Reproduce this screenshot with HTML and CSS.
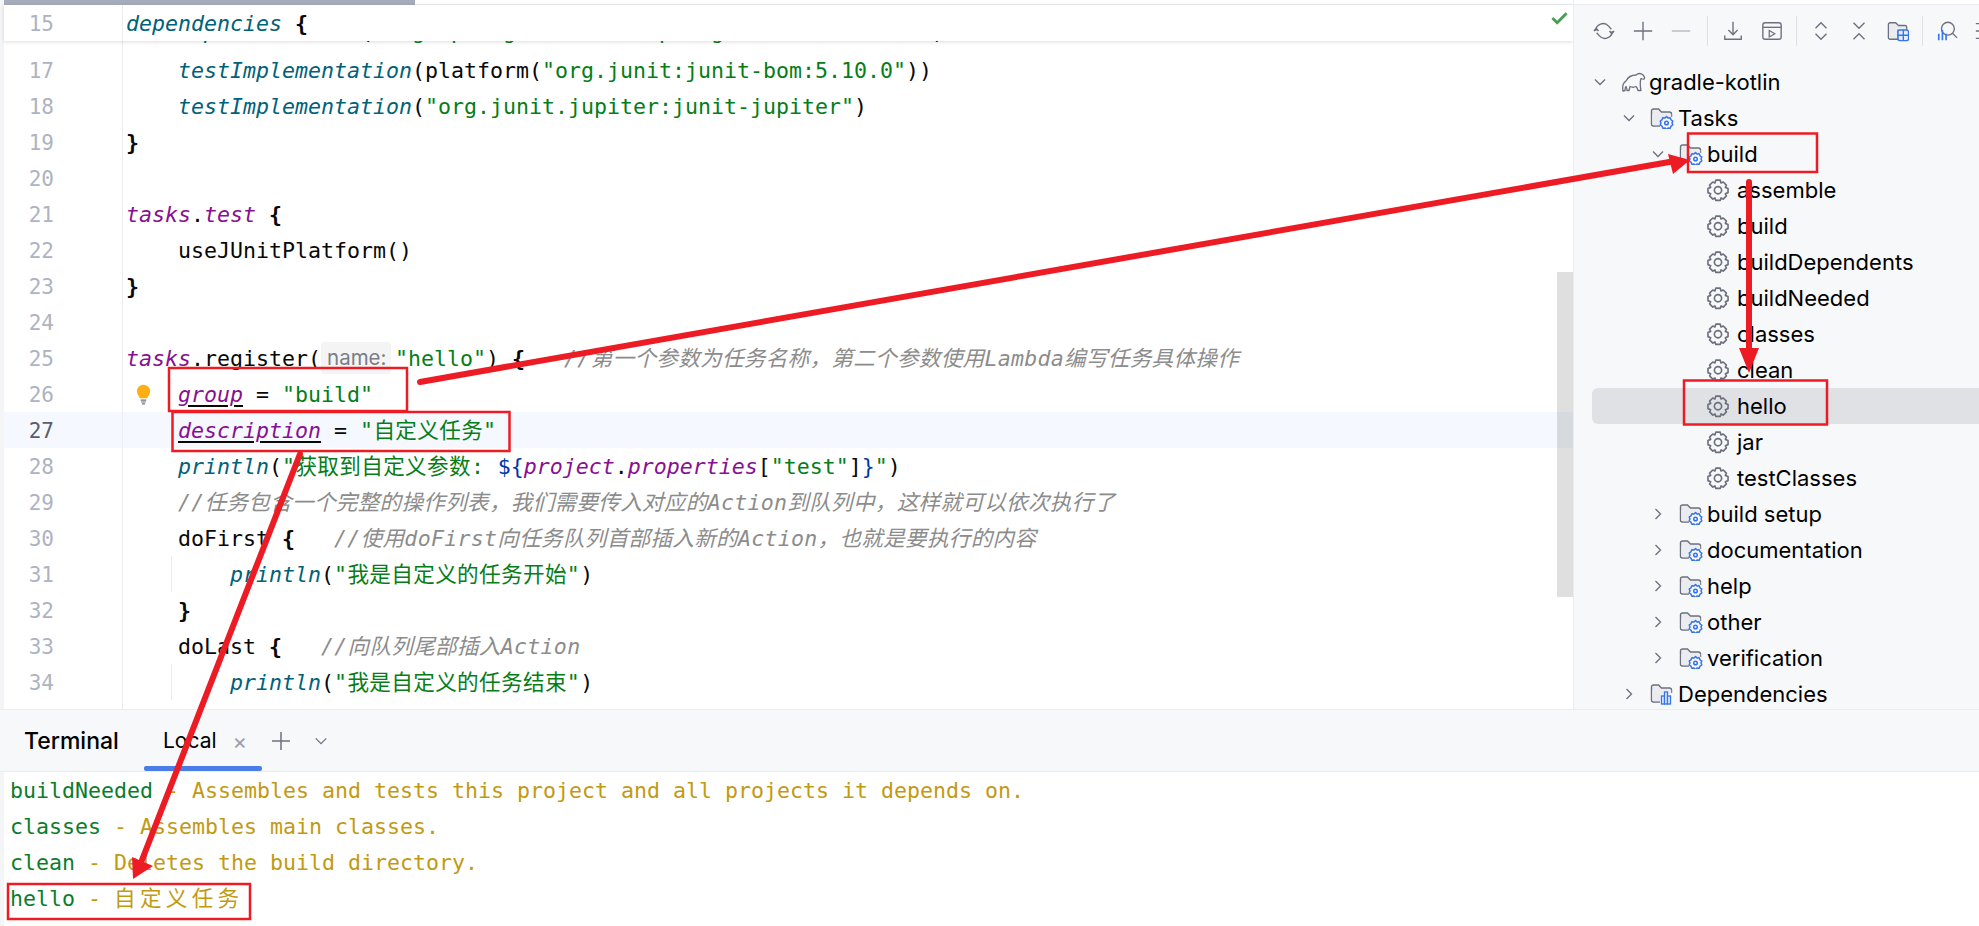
FILE: index.html
```html
<!DOCTYPE html>
<html lang="zh">
<head>
<meta charset="utf-8">
<title>gradle-kotlin</title>
<link rel="stylesheet" href="styles.css">
</head>
<body>
<svg width="0" height="0" class="defs">
  <defs>
    <symbol id="gear" viewBox="0 0 22 22"><path d="M9 2h4l.8 2.600 2-.9 2.900 2.900-1 2 2.500 1v3.800l-2.500 1 1 2-2.900 2.900-2-1L13 20.500H9l-.8-2.200-2 1-2.900-2.900 1-2-2.500-1V9.600l2.500-1-1-2 2.900-2.900 2 .9z" fill="none" stroke="#6c707e" stroke-width="1.500" stroke-linejoin="round"/><circle cx="11" cy="11.200" r="3.300" fill="none" stroke="#6c707e" stroke-width="1.500"/></symbol>
    <symbol id="chev-d" viewBox="0 0 16 16"><path d="M3 5.500l5 5 5-5" fill="none" stroke="#6c707e" stroke-width="1.300"/></symbol>
    <symbol id="chev-r" viewBox="0 0 16 16"><path d="M5.500 3l5 5-5 5" fill="none" stroke="#6c707e" stroke-width="1.300"/></symbol>
    <symbol id="fgear" viewBox="0 0 24 22"><path d="M1.500 17V4a2 2 0 0 1 2-2h5l3 3h8a2 2 0 0 1 2 2v3" fill="#ebecf0" stroke="#6c707e" stroke-width="1.400"/><path d="M1.500 17a2 2 0 0 0 2 2H10" fill="none" stroke="#6c707e" stroke-width="1.400"/><path d="M2.200 7h19v3H14l-3 8.300H3.500l-1.300-1.300z" fill="#ebecf0"/><path d="M16.500 9.500l1.500 1.600 2.200-.3.800 2 1.800 1.200-.8 2 .8 2-1.800 1.200-.8 2-2.200-.3-1.500 1.600-1.500-1.600-2.200.3-.8-2-1.800-1.200.8-2-.8-2 1.800-1.200.8-2 2.200.3z" fill="#f7f8fa" stroke="#3574f0" stroke-width="1.500" stroke-linejoin="round"/><circle cx="16.500" cy="16" r="1.800" fill="none" stroke="#3574f0" stroke-width="1.500"/></symbol>
    <symbol id="fdep" viewBox="0 0 24 22"><path d="M1.500 17V4a2 2 0 0 1 2-2h5l3 3h8a2 2 0 0 1 2 2v3" fill="#ebecf0" stroke="#6c707e" stroke-width="1.400"/><path d="M1.500 17a2 2 0 0 0 2 2H10" fill="none" stroke="#6c707e" stroke-width="1.400"/><path d="M2.200 7h19v3H11v8.300H3.500l-1.300-1.300z" fill="#ebecf0"/><rect x="11.500" y="13" width="3" height="8" fill="#e7effd" stroke="#3574f0" stroke-width="1.300"/><rect x="14.500" y="9" width="3" height="12" fill="#e7effd" stroke="#3574f0" stroke-width="1.300"/><rect x="17.500" y="13" width="3" height="8" fill="#e7effd" stroke="#3574f0" stroke-width="1.300"/></symbol>
  </defs>
</svg>

<div class="app">
  <div class="top">
    <section class="editor">
      <div class="hscroll"><div class="hthumb"></div></div>
      <div class="sticky line"><span class="num">15</span><span class="fold"></span><code class="code"><i class="fn">dependencies</i> <b>{</b></code></div>
      <div class="lines">
        <div class="line peek"><span class="num">16</span><span class="fold"></span><code class="code">    <i class="fn">implementation</i>(<s>"org.springframework:spring-context:6.0.10"</s>)</code></div>
        <div class="line"><span class="num">17</span><span class="fold"></span><code class="code">    <i class="fn">testImplementation</i>(platform(<s>"org.junit:junit-bom:5.10.0"</s>))</code></div>
        <div class="line"><span class="num">18</span><span class="fold"></span><code class="code">    <i class="fn">testImplementation</i>(<s>"org.junit.jupiter:junit-jupiter"</s>)</code></div>
        <div class="line"><span class="num">19</span><span class="fold"></span><code class="code"><b>}</b></code></div>
        <div class="line"><span class="num">20</span><span class="fold"></span><code class="code"></code></div>
        <div class="line"><span class="num">21</span><span class="fold"></span><code class="code"><i class="prop">tasks</i>.<i class="prop">test</i> <b>{</b></code></div>
        <div class="line"><span class="num">22</span><span class="fold"></span><code class="code">    useJUnitPlatform()</code></div>
        <div class="line"><span class="num">23</span><span class="fold"></span><code class="code"><b>}</b></code></div>
        <div class="line"><span class="num">24</span><span class="fold"></span><code class="code"></code></div>
        <div class="line"><span class="num">25</span><span class="fold"></span><code class="code"><i class="prop">tasks</i>.register(<span class="hint">name:</span><s>"hello"</s>) <b>{</b>   <i class="cm">//第一个参数为任务名称，第二个参数使用Lambda编写任务具体操作</i></code></div>
        <div class="line"><span class="num">26</span><span class="fold"></span><code class="code">    <i class="prop under">group</i> = <s>"build"</s></code><svg class="bulb" viewBox="0 0 16 22"><path d="M8 1a7 7 0 0 0-7 7c0 3 2 4.500 3 7.500h8c1-3 3-4.500 3-7.500a7 7 0 0 0-7-7z" fill="#ffaf0f"/><path d="M5 17.500h6M5.500 19.500h5M6.500 21.500h3" stroke="#6c707e" stroke-width="1.200"/></svg></div>
        <div class="line current"><span class="num">27</span><span class="fold"></span><code class="code">    <i class="prop under">description</i> = <s class="zh">"自定义任务"</s></code></div>
        <div class="line"><span class="num">28</span><span class="fold"></span><code class="code">    <i class="fn">println</i>(<s class="zh">"获取到自定义参数: </s><em class="tpl">${</em><i class="prop">project</i>.<i class="prop">properties</i>[<s>"test"</s>]<em class="tpl">}</em><s>"</s>)</code></div>
        <div class="line"><span class="num">29</span><span class="fold"></span><code class="code">    <i class="cm">//任务包含一个完整的操作列表，我们需要传入对应的Action到队列中，这样就可以依次执行了</i></code></div>
        <div class="line"><span class="num">30</span><span class="fold"></span><code class="code">    doFirst <b>{</b>   <i class="cm">//使用doFirst向任务队列首部插入新的Action，也就是要执行的内容</i></code></div>
        <div class="line"><span class="num">31</span><span class="fold"></span><code class="code">    <span class="guide-in"></span><i class="fn">    println</i>(<s class="zh">"我是自定义的任务开始"</s>)</code></div>
        <div class="line"><span class="num">32</span><span class="fold"></span><code class="code">    <b>}</b></code></div>
        <div class="line"><span class="num">33</span><span class="fold"></span><code class="code">    doLast <b>{</b>   <i class="cm">//向队列尾部插入Action</i></code></div>
        <div class="line"><span class="num">34</span><span class="fold"></span><code class="code">    <span class="guide-in"></span><i class="fn">    println</i>(<s class="zh">"我是自定义的任务结束"</s>)</code></div>
        <div class="line"><span class="num">35</span><span class="fold"></span><code class="code">    <b>}</b></code></div>
      </div>
      <svg class="check" viewBox="0 0 18 14"><path d="M1.500 7l5 5L16.500 2" fill="none" stroke="#499c54" stroke-width="3"/></svg>
      <div class="vthumb"></div>
    </section>

    <aside class="side">
      <div class="toolbar">
        <svg class="ti" viewBox="0 0 24 24"><path d="M3 12a8 8 0 0 1 14-5.300L20 10M21 12a8 8 0 0 1-14 5.300L4 14" fill="none" stroke="#6c707e" stroke-width="1.500"/><path d="M1 12l2.500-3L6 12M18 12l2.500 3L23 12" fill="none" stroke="#6c707e" stroke-width="1.500"/></svg>
        <svg class="ti" viewBox="0 0 24 24"><path d="M12 2v20M2 12h20" stroke="#6c707e" stroke-width="1.500"/></svg>
        <svg class="ti" viewBox="0 0 24 24"><path d="M2 12h20" stroke="#b5b8c2" stroke-width="1.500"/></svg>
        <span class="sep"></span>
        <svg class="ti" viewBox="0 0 24 24"><path d="M12 2v14M7 11l5 5 5-5M3 17v4h18v-4" fill="none" stroke="#6c707e" stroke-width="1.500"/></svg>
        <svg class="ti" viewBox="0 0 24 24"><rect x="2" y="3" width="20" height="18" rx="2.500" fill="none" stroke="#6c707e" stroke-width="1.500"/><path d="M2 8h20" stroke="#6c707e" stroke-width="1.500"/><path d="M9 11.500l6 3.500-6 3.500z" fill="none" stroke="#6c707e" stroke-width="1.400"/></svg>
        <span class="sep tight"></span>
        <svg class="ti" viewBox="0 0 24 24"><path d="M6 9l6-6 6 6M6 15l6 6 6-6" fill="none" stroke="#6c707e" stroke-width="1.500"/></svg>
        <svg class="ti" viewBox="0 0 24 24"><path d="M6 3l6 6 6-6M6 21l6-6 6 6" fill="none" stroke="#6c707e" stroke-width="1.500"/></svg>
        <svg class="ti" viewBox="0 0 24 24"><path d="M1.500 19V5a2 2 0 0 1 2-2h6l3 3h7a2 2 0 0 1 2 2v3H12v10H3.500a2 2 0 0 1-2-2z" fill="#ebecf0" stroke="#6c707e" stroke-width="1.400"/><rect x="12" y="11" width="11.500" height="11.500" rx="2" fill="#e7effd" stroke="#3574f0" stroke-width="1.500"/><path d="M17.800 11v11.500M12 16.700h11.500" stroke="#3574f0" stroke-width="1.500"/></svg>
        <span class="sep tight"></span>
        <svg class="ti" viewBox="0 0 24 24"><circle cx="13" cy="9.500" r="7" fill="none" stroke="#6c707e" stroke-width="1.500"/><path d="M18 14.500l5 5" stroke="#6c707e" stroke-width="1.500"/><path d="M3 15v7M7 11v11M11 15v7" stroke="#3574f0" stroke-width="1.800"/></svg>
        <svg class="ti" viewBox="0 0 24 24"><path d="M2 4h6M2 12h6M2 20h6" stroke="#6c707e" stroke-width="1.500"/></svg>
      </div>
      <div class="tree">
        <div class="row d0"><svg class="ch"><use href="#chev-d"/></svg><svg class="ic wide" viewBox="0 0 26 22"><path d="M2 20c-1-5 0-8 3-10 2-4 6-6 10-6 2-2 5-2 7 0 1 1 2 3 1 4-1 .5-2 0-3-.5-1 3-1 7 0 12h-3c-.5-2-1-3-2-4-2 1-4 1-6 0l-1 4H6c0-2-.5-3-1-4-1 1-1 2-1 4z" fill="none" stroke="#6c707e" stroke-width="1.300" stroke-linejoin="round"/></svg><span>gradle-kotlin</span></div>
        <div class="row d1"><svg class="ch"><use href="#chev-d"/></svg><svg class="ic"><use href="#fgear"/></svg><span>Tasks</span></div>
        <div class="row d2"><svg class="ch"><use href="#chev-d"/></svg><svg class="ic"><use href="#fgear"/></svg><span>build</span></div>
        <div class="row d3"><svg class="ic g"><use href="#gear"/></svg><span>assemble</span></div>
        <div class="row d3"><svg class="ic g"><use href="#gear"/></svg><span>build</span></div>
        <div class="row d3"><svg class="ic g"><use href="#gear"/></svg><span>buildDependents</span></div>
        <div class="row d3"><svg class="ic g"><use href="#gear"/></svg><span>buildNeeded</span></div>
        <div class="row d3"><svg class="ic g"><use href="#gear"/></svg><span>classes</span></div>
        <div class="row d3"><svg class="ic g"><use href="#gear"/></svg><span>clean</span></div>
        <div class="row d3 selected"><svg class="ic g"><use href="#gear"/></svg><span>hello</span></div>
        <div class="row d3"><svg class="ic g"><use href="#gear"/></svg><span>jar</span></div>
        <div class="row d3"><svg class="ic g"><use href="#gear"/></svg><span>testClasses</span></div>
        <div class="row d2"><svg class="ch"><use href="#chev-r"/></svg><svg class="ic"><use href="#fgear"/></svg><span>build setup</span></div>
        <div class="row d2"><svg class="ch"><use href="#chev-r"/></svg><svg class="ic"><use href="#fgear"/></svg><span>documentation</span></div>
        <div class="row d2"><svg class="ch"><use href="#chev-r"/></svg><svg class="ic"><use href="#fgear"/></svg><span>help</span></div>
        <div class="row d2"><svg class="ch"><use href="#chev-r"/></svg><svg class="ic"><use href="#fgear"/></svg><span>other</span></div>
        <div class="row d2"><svg class="ch"><use href="#chev-r"/></svg><svg class="ic"><use href="#fgear"/></svg><span>verification</span></div>
        <div class="row d1"><svg class="ch"><use href="#chev-r"/></svg><svg class="ic"><use href="#fdep"/></svg><span>Dependencies</span></div>
      </div>
    </aside>
  </div>

  <section class="terminal">
    <div class="tabs">
      <span class="ttl">Terminal</span>
      <span class="tab">Local<span class="x">×</span></span>
      <svg class="plus" viewBox="0 0 20 20"><path d="M10 1v18M1 10h18" stroke="#6c707e" stroke-width="1.500"/></svg>
      <svg class="more" viewBox="0 0 16 16"><path d="M2 5l6 6 6-6" fill="none" stroke="#6c707e" stroke-width="1.400"/></svg>
    </div>
    <div class="out">
      <div class="oline"><u>buildNeeded</u> - Assembles and tests this project and all projects it depends on.</div>
      <div class="oline"><u>classes</u> - Assembles main classes.</div>
      <div class="oline"><u>clean</u> - Deletes the build directory.</div>
      <div class="oline"><u>hello</u> - <span class="wide-cjk">自定义任务</span></div>
      <div class="oline"><u>jar</u> - Assembles a jar archive containing the classes of the 'main' feature.</div>
    </div>
  </section>
</div>

<svg class="notes" viewBox="0 0 1979 926" width="1979" height="926">
  <g fill="none" stroke="#ed1c24" stroke-width="2.500">
    <rect x="169" y="368" width="238" height="43"/>
    <rect x="172.500" y="412" width="337" height="39"/>
    <rect x="8" y="884" width="242" height="35"/>
    <rect x="1688" y="133.500" width="129" height="38.500"/>
    <rect x="1684" y="380.500" width="143" height="44"/>
  </g>
  <g stroke="#ed1c24" stroke-width="6" stroke-linecap="round">
    <path d="M420 382L1675 161"/>
    <path d="M1749 182V352"/>
    <path d="M300 454L142 860"/>
  </g>
  <g fill="#ed1c24">
    <path d="M1690 160L1668 154L1673 174z"/>
    <path d="M1749 373L1739 348H1759z"/>
    <path d="M133 879L132 857L153 866z"/>
  </g>
</svg>
</body>
</html>
```

FILE: styles.css
```css
* { box-sizing: border-box; }
html, body { margin: 0; padding: 0; height: 100%; overflow: hidden; background: #fff; }
body { position: relative; width: 1979px; height: 926px; color: #000; font-family: "Inter", "Noto Sans CJK SC", sans-serif; }
.defs { position: absolute; }
.app { display: flex; flex-direction: column; width: 1979px; height: 926px; }
.top { display: flex; height: 709px; flex: none; }

/* editor */
.editor { position: relative; flex: none; width: 1573px; height: 709px; overflow: hidden; padding-left: 4px; background: #fff; box-shadow: inset 4px 0 0 #f4f5f7; }
.hscroll { position: absolute; left: 4px; right: 0; top: 0; height: 5px; border-bottom: 1px solid #ebecf0; }
.hthumb { width: 411px; height: 5px; background: #a6acbb; }
.lines { padding-top: 16px; }
.line { position: relative; display: flex; height: 36px; align-items: flex-start; font: 21.6px/38px "DejaVu Sans Mono", "Noto Sans CJK SC", monospace; color: #080808; }
.sticky { position: absolute; left: 4px; right: 0; top: 5px; z-index: 2; background: #fff; box-shadow: 0 1px 4px rgba(0,0,0,.14); }
.num { flex: none; width: 50px; text-align: right; color: #aeb3c2; font-size: 21px; }
.fold { flex: none; width: 69px; height: 36px; border-right: 1px solid #ebecf0; }
.code { display: block; position: relative; padding-left: 3px; font: inherit; height: 36px; white-space: pre; }
.peek .code { margin-top: -3px; }
.peek .num { margin-top: -6px; }
.current { background: #f5f8fe; }
.current .num { color: #5a5d6b; }
.bulb { position: absolute; left: 132px; top: 7px; width: 15px; height: 22px; }
.code b { font-weight: 700; }
.code s { text-decoration: none; color: #067d17; }
.code i { font-style: italic; }
.zh { letter-spacing: .35px; }
.fn { color: #00627a; }
.prop { color: #871094; }
.cm { color: #8c8c8c; letter-spacing: .28px; }
.tpl { font-style: normal; color: #0037a6; }
.under { text-decoration: underline; text-underline-offset: 3px; text-decoration-color: #080808; }
.hint { display: inline-block; font: 20.5px/32px "Inter", sans-serif; color: #7a7e85; background: #f4f4f5; border-radius: 4px; padding: 0 6px; height: 32px; width: 70px; margin-right: 4px; vertical-align: 1px; }
.guide-in { position: absolute; left: 48px; top: 0; width: 1px; height: 36px; background: #ebecf0; }
.check { position: absolute; right: 5px; top: 11px; width: 17px; height: 14px; z-index: 3; }
.vthumb { position: absolute; right: 0; top: 272px; width: 16px; height: 325px; background: rgba(0,0,0,.125); z-index: 3; }

/* gradle panel */
.side { flex: 1; min-width: 0; background: #f7f8fa; border-left: 1px solid #ebecf0; overflow: hidden; box-shadow: inset 0 4px 0 #fff, inset 0 5px 0 #ebecf0; }
.toolbar { display: flex; align-items: center; height: 46px; margin-top: 8px; padding-left: 19px; gap: 16.5px; }
.ti { flex: none; width: 22px; height: 22px; }
.sep { flex: none; width: 1px; height: 30px; background: #dfe1e5; margin: 0 -2px; }
.sep.tight { margin: 0 -3.5px; }
.tree { padding-top: 10px; font-size: 22px; line-height: 36px; padding-left: 18px; }
.row { display: flex; align-items: center; height: 36px; white-space: nowrap; color: #000; }
.ch { flex: none; width: 16px; height: 16px; margin-right: 13px; }
.ic { flex: none; width: 24px; height: 22px; margin-right: 4px; }
.ic.wide { width: 26px; margin-right: 2px; }
.d1 { padding-left: 29px; }
.d2 { padding-left: 58px; }
.d3 { padding-left: 114px; }
.ic.g { width: 24px; height: 24px; margin-right: 7px; }
.selected { background: #dfe1e5; border-radius: 6px 0 0 6px; }

/* terminal */
.terminal { flex: 1; min-height: 0; overflow: hidden; box-shadow: inset 4px 0 0 #f4f5f7; background: #fff; }
.tabs { display: flex; align-items: center; height: 63px; background: #f7f8fa; border-top: 1px solid #ebecf0; border-bottom: 1px solid #ebecf0; padding-left: 24px; font-size: 21px; }
.ttl { font-weight: 500; width: 120px; font-size: 23px; }
.tab { position: relative; height: 61px; display: flex; align-items: center; width: 118px; padding-left: 19px; color: #000; }
.tab::after { content: ""; position: absolute; left: 0; right: 0; bottom: 0; height: 5px; background: #4a7de8; border-radius: 2px; }
.x { color: #9a9ea8; font-size: 22px; margin-left: 16px; }
.plus { width: 20px; height: 20px; margin-left: 9px; }
.more { width: 14px; height: 14px; margin-left: 23px; }
.out { padding: 0 0 0 10px; font: 21.6px/38px "DejaVu Sans Mono", "Noto Sans CJK SC", monospace; color: #c29a12; }
.oline { height: 36px; white-space: pre; }
.oline u { text-decoration: none; color: #0a7d2c; }
.wide-cjk { letter-spacing: 4.3px; }

/* annotations painted on the screenshot */
.notes { position: absolute; left: 0; top: 0; z-index: 10; pointer-events: none; }
```
